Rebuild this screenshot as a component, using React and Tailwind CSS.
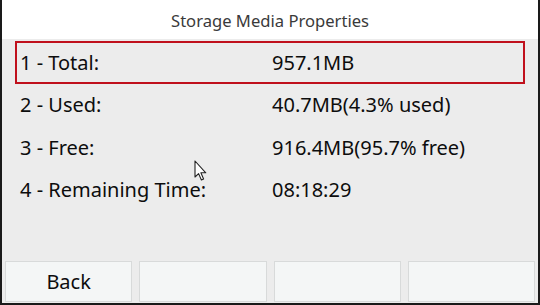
import React from "react";

const rows = [
  ["1 - Total:", "957.1MB"],
  ["2 - Used:", "40.7MB(4.3% used)"],
  ["3 - Free:", "916.4MB(95.7% free)"],
  ["4 - Remaining Time:", "08:18:29"],
];

function Cursor() {
  return (
    <svg
      className="absolute left-[192px] top-[160px]"
      width="14"
      height="22"
      viewBox="0 0 14 22"
    >
      <path
        d="M1 1 L1 17 L4.6 13.6 L7.4 20 L9.6 19 L6.9 12.8 L11.8 12.8 Z"
        fill="#fff"
        stroke="#222"
        strokeWidth="1.1"
        strokeLinejoin="round"
      />
    </svg>
  );
}

export default function App() {
  return (
    <div
      className="relative w-[540px] h-[305px] bg-[#ececec] border-x-2 border-b-2 border-[#1a1a1a] flex flex-col overflow-hidden"
      style={{ fontFamily: "'Noto Sans', 'DejaVu Sans', sans-serif" }}
    >
      <div className="h-[39px] bg-white flex items-center justify-center text-[16.6px] text-[#3a3a3a] pt-[3px]">
        Storage Media Properties
      </div>
      <div className="flex flex-col px-[13px] pt-[2px]">
        {rows.map(([k, v], i) => (
          <div
            key={k}
            className={
              "h-[42.5px] flex items-center text-[20px] text-[#0d0d0d] pt-[1px] " +
              (i === 0
                ? "border-2 border-[#c0101c] pl-[3px]"
                : "border-2 border-transparent pl-[3px]")
            }
          >
            <div className="w-[252px]">{k}</div>
            <div>{v}</div>
          </div>
        ))}
      </div>
      <div className="flex-1" />
      <div className="flex gap-[7px] px-[3px] pb-[1px] h-[42px]">
        {["Back", "", "", ""].map((t, i) => (
          <div
            key={i}
            className="flex-1 bg-[#f4f6f6] border border-[#d8dada] flex items-center justify-center text-[20px] text-[#0d0d0d]"
          >
            {t}
          </div>
        ))}
      </div>
      <Cursor />
    </div>
  );
}
